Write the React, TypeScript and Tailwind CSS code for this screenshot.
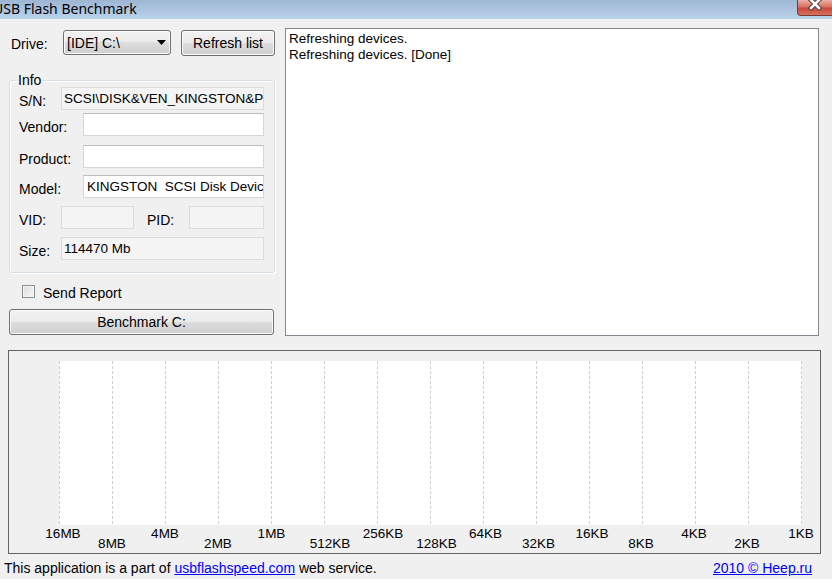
import React from "react";

const btnBg =
  "bg-[linear-gradient(#f2f2f2_0%,#ebebeb_50%,#dddddd_50%,#cfcfcf_100%)] shadow-[inset_0_0_0_1px_#fbfbfb]";

const axis = [
  { t: "16MB", c: 63, r: 0 },
  { t: "8MB", c: 112, r: 1 },
  { t: "4MB", c: 165, r: 0 },
  { t: "2MB", c: 218, r: 1 },
  { t: "1MB", c: 271.5, r: 0 },
  { t: "512KB", c: 330, r: 1 },
  { t: "256KB", c: 383, r: 0 },
  { t: "128KB", c: 436.5, r: 1 },
  { t: "64KB", c: 485.5, r: 0 },
  { t: "32KB", c: 538.5, r: 1 },
  { t: "16KB", c: 592, r: 0 },
  { t: "8KB", c: 641, r: 1 },
  { t: "4KB", c: 694, r: 0 },
  { t: "2KB", c: 747, r: 1 },
  { t: "1KB", c: 801, r: 0 },
];

function Field({
  children,
  white,
  w,
  pl = "pl-[2px]",
}: {
  children?: React.ReactNode;
  white?: boolean;
  w: string;
  pl?: string;
}) {
  return (
    <div
      className={`${w} h-[23px] flex items-center overflow-hidden whitespace-pre border text-[13.5px] ${pl} ${
        white
          ? "bg-white border-[#d3d6da] border-t-[#b9bcc1]"
          : "bg-[#f4f4f4] border-[#dcdcdc]"
      }`}
    >
      {children}
    </div>
  );
}

function Label({ children, w }: { children: React.ReactNode; w: string }) {
  return <div className={`${w} pt-[5px] shrink-0`}>{children}</div>;
}

export default function App() {
  return (
    <div
      className="w-[832px] h-[579px] overflow-hidden bg-[#f0f0f0] text-black text-[14px] leading-[16px] flex flex-col"
      style={{ fontFamily: '"Liberation Sans", Arial, sans-serif' }}
    >
      {/* Title bar */}
      <div className="h-[19px] shrink-0 flex justify-between bg-[linear-gradient(#9db6d4,#bad2eb)]">
        <div
          className="ml-[-7px] text-[14px] leading-[17px] text-black"
          style={{ fontFamily: '"Noto Sans", "Open Sans", sans-serif' }}
        >
          USB Flash Benchmark
        </div>
        <div className="w-[36px] h-[16px] mr-[-1px] flex items-center justify-center rounded-bl-[4px] border border-t-0 border-[#7a3a32] bg-[linear-gradient(#eab0a3_0%,#d8705f_45%,#c8493a_55%,#d7705e_100%)]">
          <svg width="14" height="14" viewBox="0 0 14 14" className="mt-[-8px]">
            <path d="M3 3 L11 11 M11 3 L3 11" stroke="#5a3a3a" strokeWidth="4.5" strokeLinecap="square" />
            <path d="M3 3 L11 11 M11 3 L3 11" stroke="#ffffff" strokeWidth="2.5" strokeLinecap="square" />
          </svg>
        </div>
      </div>

      {/* Main */}
      <div className="flex pt-[9px] shrink-0">
        <div className="ml-[9px] w-[266px] flex flex-col">
          {/* Drive row */}
          <div className="mt-[2px] h-[25px] flex items-center">
            <div className="ml-[2px] w-[52px] pt-[2px]">Drive:</div>
            <div
              className={`w-[108px] h-[25px] rounded-[3px] border border-[#707070] ${btnBg} flex items-center justify-between pl-[3px] pr-[4px]`}
            >
              <span>[IDE] C:\</span>
              <svg width="9" height="5" viewBox="0 0 9 5">
                <path d="M0 0 H9 L4.5 5 Z" fill="#000" />
              </svg>
            </div>
            <div
              className={`ml-[10px] w-[94px] h-[26px] rounded-[3px] border border-[#707070] ${btnBg} flex items-center justify-center`}
            >
              Refresh list
            </div>
          </div>

          {/* Info group */}
          <fieldset className="mt-[18px] h-[200px] border border-[#d5dfe5] rounded-[3px] shadow-[inset_1px_1px_0_#ffffff,1px_1px_0_#ffffff] p-0 m-0 min-w-0">
            <legend className="ml-[7px] px-[1px] leading-[14px]">Info</legend>
            <div className="flex flex-col pl-[9px]">
              <div className="flex items-center">
                <Label w="w-[42px]">S/N:</Label>
                <Field w="w-[203px]">SCSI\DISK&amp;VEN_KINGSTON&amp;PROD_DATATRAVELER_3.0</Field>
              </div>
              <div className="flex items-center mt-[3px]">
                <Label w="w-[64px]">Vendor:</Label>
                <Field w="w-[181px]" white />
              </div>
              <div className="flex items-center mt-[9px]">
                <Label w="w-[64px]">Product:</Label>
                <Field w="w-[181px]" white />
              </div>
              <div className="flex items-center mt-[7px]">
                <Label w="w-[64px]">Model:</Label>
                <Field w="w-[181px]" white pl="pl-[3px]">
                  KINGSTON  SCSI Disk Device
                </Field>
              </div>
              <div className="flex items-center mt-[8px]">
                <Label w="w-[42px]">VID:</Label>
                <Field w="w-[73px]" />
                <div className="ml-[13px]">
                  <Label w="w-[42px]">PID:</Label>
                </div>
                <Field w="w-[75px]" />
              </div>
              <div className="flex items-center mt-[8px]">
                <Label w="w-[42px]">Size:</Label>
                <Field w="w-[203px]">114470 Mb</Field>
              </div>
            </div>
          </fieldset>

          {/* Send report */}
          <div className="mt-[12px] h-[13px] flex items-center">
            <div className="ml-[13px] w-[13px] h-[13px] border border-[#8e8f8f] bg-[linear-gradient(135deg,#dcdcdc,#f8f8f8)] shadow-[inset_0_0_0_1px_#f4f4f4]" />
            <div className="ml-[8px] pt-[2px]">Send Report</div>
          </div>

          {/* Benchmark button */}
          <div
            className={`mt-[11px] w-[265px] h-[26px] rounded-[3px] border border-[#707070] ${btnBg} flex items-center justify-center`}
          >
            Benchmark C:
          </div>
        </div>

        {/* Log */}
        <div className="ml-[10px] w-[534px] h-[308px] bg-white border border-[#828790] pl-[3px] pt-[2px] text-[13.5px]">
          <div>Refreshing devices.</div>
          <div>Refreshing devices. [Done]</div>
        </div>
      </div>

      {/* Chart */}
      <div className="mt-[14px] ml-[8px] w-[813px] h-[204px] border border-[#646464] shrink-0 flex flex-col">
        <div className="mt-[10px] ml-[50px] w-[743px] h-[164px] bg-white">
          <svg width="743" height="164" viewBox="0 0 743 164">
            {axis.map((_, i) => (
              <line
                key={i}
                x1={i * 53 + 0.5}
                x2={i * 53 + 0.5}
                y1={0}
                y2={164}
                stroke="#cfcfcf"
                strokeWidth={1}
                strokeDasharray="3 2"
              />
            ))}
          </svg>
        </div>
        <div className="relative h-[27px] text-black text-[13.5px]">
          {axis.map((a) => (
            <div
              key={a.t}
              className={`absolute -translate-x-1/2 whitespace-nowrap ${a.r === 0 ? "top-[1px]" : "top-[11px]"}`}
              style={{ left: a.c - 9 }}
            >
              {a.t}
            </div>
          ))}
        </div>
      </div>

      {/* Footer */}
      <div className="h-[25px] flex items-center justify-between pl-[4px] pr-[20px] pt-[2px]">
        <div>
          This application is a part of{" "}
          <span className="text-[#0000ff] underline">usbflashspeed.com</span> web service.
        </div>
        <div className="text-[#0000ff] underline">2010 © Heep.ru</div>
      </div>
    </div>
  );
}
